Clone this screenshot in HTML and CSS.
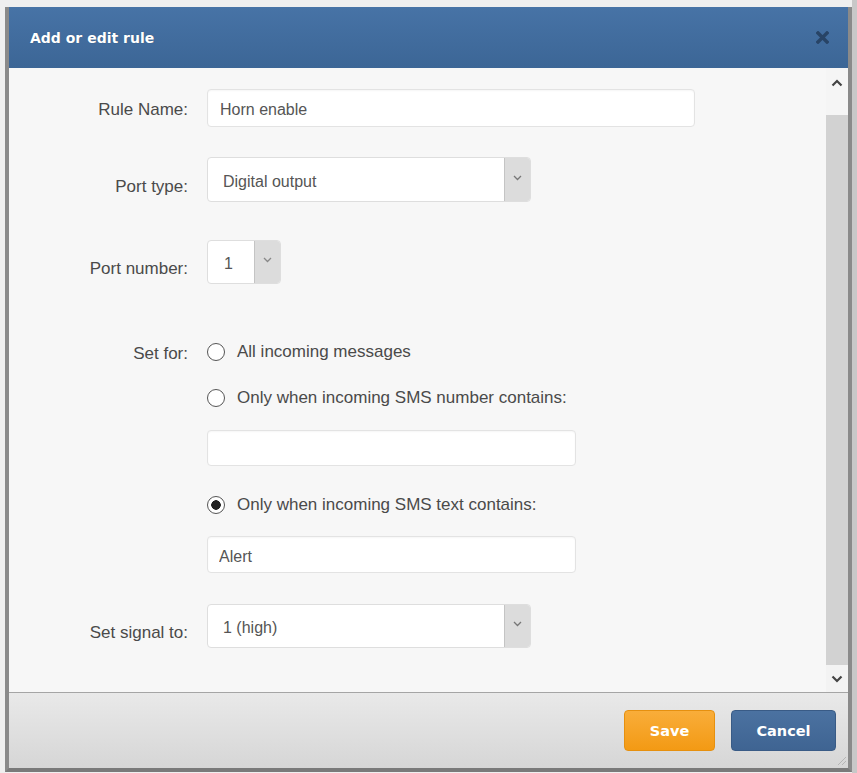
FILE: index.html
```html
<!DOCTYPE html>
<html lang="en">
    <head>
        <meta charset="UTF-8">
        <meta name="viewport" content="width=device-width, initial-scale=1.0">
        <title>Add or edit rule</title>
        <link rel="stylesheet" href="styles.css">
    </head>
    <body>
        <div class="dialog">
            <div class="dialog-header">
                <span class="dialog-title">Add or edit rule</span>
                <svg class="close-icon" width="13" height="13" viewBox="0 0 13 13">
                    <path d="M2 2 L11 11 M11 2 L2 11" stroke="#284466" stroke-width="3.4" stroke-linecap="square"/>
                </svg>
            </div>

            <div class="dialog-body">
                <div class="form">
                    <div class="row row-name">
                        <label class="label">Rule Name:</label>
                        <input class="text-input input-name" type="text" value="Horn enable">
                    </div>

                    <div class="row row-type">
                        <label class="label label-select">Port type:</label>
                        <div class="select select-wide">
                            <span class="select-value">Digital output</span>
                            <span class="select-arrow">
                                <svg width="9" height="6" viewBox="0 0 9 6"><path d="M1 1 L4.5 4.5 L8 1" fill="none" stroke="#777" stroke-width="1.3"/></svg>
                            </span>
                        </div>
                    </div>

                    <div class="row row-number">
                        <label class="label label-select">Port number:</label>
                        <div class="select select-small">
                            <span class="select-value">1</span>
                            <span class="select-arrow">
                                <svg width="9" height="6" viewBox="0 0 9 6"><path d="M1 1 L4.5 4.5 L8 1" fill="none" stroke="#888" stroke-width="1.3"/></svg>
                            </span>
                        </div>
                    </div>

                    <div class="row row-setfor">
                        <label class="label">Set for:</label>
                        <label class="radio-line"><input type="radio" name="setfor" class="radio"> All incoming messages</label>
                    </div>
                    <div class="row row-sub first-sub">
                        <span class="label"></span>
                        <label class="radio-line"><input type="radio" name="setfor" class="radio"> Only when incoming SMS number contains:</label>
                    </div>
                    <div class="row row-sub sub-input">
                        <span class="label"></span>
                        <input class="text-input input-sms" type="text" value="">
                    </div>
                    <div class="row row-sub sub-radio">
                        <span class="label"></span>
                        <label class="radio-line"><input type="radio" name="setfor" class="radio" checked> Only when incoming SMS text contains:</label>
                    </div>
                    <div class="row row-sub sub-input2">
                        <span class="label"></span>
                        <input class="text-input input-sms input-alert" type="text" value="Alert">
                    </div>

                    <div class="row row-signal">
                        <label class="label label-select">Set signal to:</label>
                        <div class="select select-wide select-signal">
                            <span class="select-value">1 (high)</span>
                            <span class="select-arrow">
                                <svg width="9" height="6" viewBox="0 0 9 6"><path d="M1 1 L4.5 4.5 L8 1" fill="none" stroke="#777" stroke-width="1.3"/></svg>
                            </span>
                        </div>
                    </div>
                </div>

                <div class="scrollbar">
                    <div class="scroll-up">
                        <svg width="12" height="8" viewBox="0 0 12 8"><path d="M1.5 6.5 L6 2 L10.5 6.5" fill="none" stroke="#444" stroke-width="2.2"/></svg>
                    </div>
                    <div class="scroll-track"></div>
                    <div class="scroll-down">
                        <svg width="12" height="8" viewBox="0 0 12 8"><path d="M1.5 1.5 L6 6 L10.5 1.5" fill="none" stroke="#444" stroke-width="2.2"/></svg>
                    </div>
                </div>
            </div>

            <div class="dialog-footer">
                <button class="btn btn-save">Save</button>
                <button class="btn btn-cancel">Cancel</button>
                <svg class="grip" width="12" height="12" viewBox="0 0 12 12">
                    <path d="M11 3 L3 11 M11 7 L7 11" stroke="#b5b5b5" stroke-width="1"/>
                </svg>
            </div>
        </div>
    </body>
</html>
```

FILE: styles.css
```css
body {
    margin: 0;
    padding: 7px 0 0 5px;
    background: linear-gradient(to right, #efefef 852px, #c8c8c8 852px);
    font-family: "Liberation Sans", Arial, sans-serif;
}
.dialog {
    width: 839px;
    border-left: 4px solid #8a8a8a;
    border-right: 4px solid #8a8a8a;
    border-bottom: 4px solid #7a7a7a;
    background: #f7f7f7;
}
.dialog-header {
    height: 61px;
    display: flex;
    align-items: center;
    justify-content: space-between;
    padding: 0 19px 0 21px;
    background: linear-gradient(#4773a6, #3c6696);
}
.dialog-title {
    font-family: "DejaVu Sans", Verdana, sans-serif;
    font-weight: bold;
    font-size: 14px;
    color: #fff;
    text-shadow: 0 0 1px rgba(0,0,0,0.3);
}
.close-icon {
    display: block;
}
.dialog-body {
    display: flex;
    height: 624px;
    background: #f7f7f7;
}
.form {
    flex: 1;
    padding-top: 21px;
}
.row {
    display: flex;
    align-items: center;
}
.label {
    width: 179px;
    margin-right: 19px;
    padding-top: 3px;
    text-align: right;
    font-size: 17px;
    color: #4a4a4a;
    flex-shrink: 0;
}
.label-select {
    padding-top: 14px;
}
.text-input {
    box-sizing: border-box;
    height: 38px;
    border: 1px solid #e3e3e3;
    border-radius: 4px;
    background: #fff;
    box-shadow: inset 0 1px 2px rgba(0,0,0,0.04);
    font-family: "Liberation Sans", Arial, sans-serif;
    font-size: 16px;
    color: #555;
    padding: 4px 12px 0;
    outline: none;
}
.input-name {
    width: 488px;
}
.input-sms {
    width: 369px;
    height: 36px;
}
.input-alert {
    height: 37px;
    padding-left: 11px;
}
.select {
    box-sizing: border-box;
    display: flex;
    height: 45px;
    border: 1px solid #dedede;
    border-radius: 4px;
    background: #fff;
    overflow: hidden;
}
.select-value {
    flex: 1;
    display: flex;
    align-items: center;
    padding-left: 15px;
    padding-top: 4px;
    font-size: 16px;
    color: #555;
}
.select-arrow {
    width: 25px;
    display: flex;
    align-items: center;
    justify-content: center;
    background: #dcdcdc;
    border-left: 1px solid #c4c4c4;
    padding-bottom: 4px;
}
.select-wide {
    width: 324px;
}
.select-small {
    width: 74px;
    height: 44px;
}
.select-small .select-value {
    padding-left: 16px;
}
.select-signal {
    height: 44px;
}
.row-type {
    margin-top: 30px;
}
.row-number {
    margin-top: 38px;
}
.row-setfor {
    margin-top: 56px;
}
.radio-line {
    display: flex;
    align-items: center;
    height: 24px;
    font-size: 17px;
    color: #4a4a4a;
    cursor: pointer;
}
.radio {
    appearance: none;
    -webkit-appearance: none;
    box-sizing: border-box;
    width: 18px;
    height: 18px;
    margin: 0 12px 0 0;
    border: 1.5px solid #555;
    border-radius: 50%;
    background: #fff;
}
.radio:checked {
    background: radial-gradient(circle, #222 0, #222 4.5px, #fff 5px);
}
.first-sub {
    margin-top: 22px;
}
.sub-input {
    margin-top: 20px;
}
.sub-radio {
    margin-top: 27px;
}
.sub-input2 {
    margin-top: 19px;
}
.row-signal {
    margin-top: 31px;
}
.scrollbar {
    width: 22px;
    display: flex;
    flex-direction: column;
}
.scroll-up {
    height: 47px;
    display: flex;
    justify-content: center;
    padding-top: 11px;
    box-sizing: border-box;
    background: #f5f5f5;
}
.scroll-track {
    flex: 1;
    background: #d2d2d2;
}
.scroll-down {
    height: 27px;
    display: flex;
    justify-content: center;
    align-items: center;
    background: #f3f3f3;
}
.dialog-footer {
    position: relative;
    height: 75px;
    border-top: 1px solid #a5a5a5;
    background: linear-gradient(#e9e9e9, #d6d6d6);
    display: flex;
    align-items: center;
    justify-content: flex-end;
    padding-right: 12px;
    gap: 16px;
}
.btn {
    height: 41px;
    border: none;
    border-radius: 4px;
    font-family: "DejaVu Sans", Verdana, sans-serif;
    font-weight: bold;
    font-size: 14.5px;
    color: #fff;
    cursor: pointer;
}
.btn-save {
    width: 91px;
    background: linear-gradient(#f9ad3a, #f39a14);
    border: 1px solid #e6900f;
}
.btn-cancel {
    width: 105px;
    background: linear-gradient(#4b72a1, #3f6492);
    border: 1px solid #395b86;
}
.grip {
    position: absolute;
    right: 1px;
    bottom: 2px;
}
```
